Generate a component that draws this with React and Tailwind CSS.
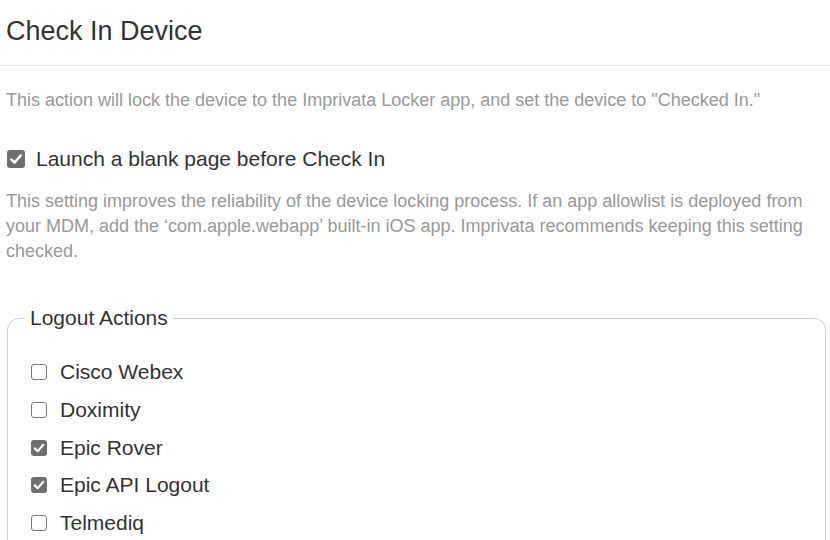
import React from "react";

function Box({ checked, size = 16 }) {
  const cls =
    size === 18
      ? "w-[18px] h-[18px] rounded-[3px]"
      : "w-[16px] h-[16px] rounded-[3px]";
  if (checked) {
    return (
      <span className={`${cls} shrink-0 bg-[#6f6f6f] flex items-center justify-center`}>
        <svg viewBox="0 0 16 16" className="w-full h-full">
          <path d="M3.8 8.4 L6.7 11.2 L12.2 4.9" fill="none" stroke="#fff" strokeWidth="2.2" strokeLinecap="round" strokeLinejoin="round" />
        </svg>
      </span>
    );
  }
  return <span className={`${cls} shrink-0 bg-white border border-[#7a7a7a]`} />;
}

const items = [
  ["Cisco Webex", false],
  ["Doximity", false],
  ["Epic Rover", true],
  ["Epic API Logout", true],
  ["Telmediq", false],
];

export default function App() {
  return (
    <div className="w-[830px] h-[540px] overflow-hidden bg-white" style={{ fontFamily: '"Liberation Sans", Arial, sans-serif' }}>
      <div className="pt-[15px] pb-[18px] pl-[6px] border-b border-[#e6e6e6]">
        <h1 className="text-[27px] leading-[32px] text-[#333333] font-normal">Check In Device</h1>
      </div>
      <div className="pl-[6px] pr-[4px]">
        <p className="mt-[22px] text-[18px] leading-[24px] text-[#999999]">
          This action will lock the device to the Imprivata Locker app, and set the device to "Checked In."
        </p>
        <label className="mt-[33px] flex items-center gap-[11px] pl-[1px] text-[21px] leading-[28px] text-[#333333]">
          <Box checked size={18} />
          <span>Launch a blank page before Check In</span>
        </label>
        <p className="mt-[16px] text-[18px] leading-[25px] text-[#999999]">
          This setting improves the reliability of the device locking process. If an app allowlist is deployed from your MDM, add the ‘com.apple.webapp’ built-in iOS app. Imprivata recommends keeping this setting checked.
        </p>
        <fieldset className="mt-[40px] ml-[1px] border border-[#cccccc] rounded-[12px] pl-[17px] pt-[26px] pb-[20px]">
          <legend className="px-[5px] text-[21px] leading-[28px] text-[#333333]">Logout Actions</legend>
          <div className="flex flex-col gap-[9.75px] ml-[6px]">
            {items.map(([name, c]) => (
              <label key={name} className="flex items-center gap-[13px] text-[21px] leading-[28px] text-[#333333]">
                <Box checked={c} />
                <span>{name}</span>
              </label>
            ))}
          </div>
        </fieldset>
      </div>
    </div>
  );
}
